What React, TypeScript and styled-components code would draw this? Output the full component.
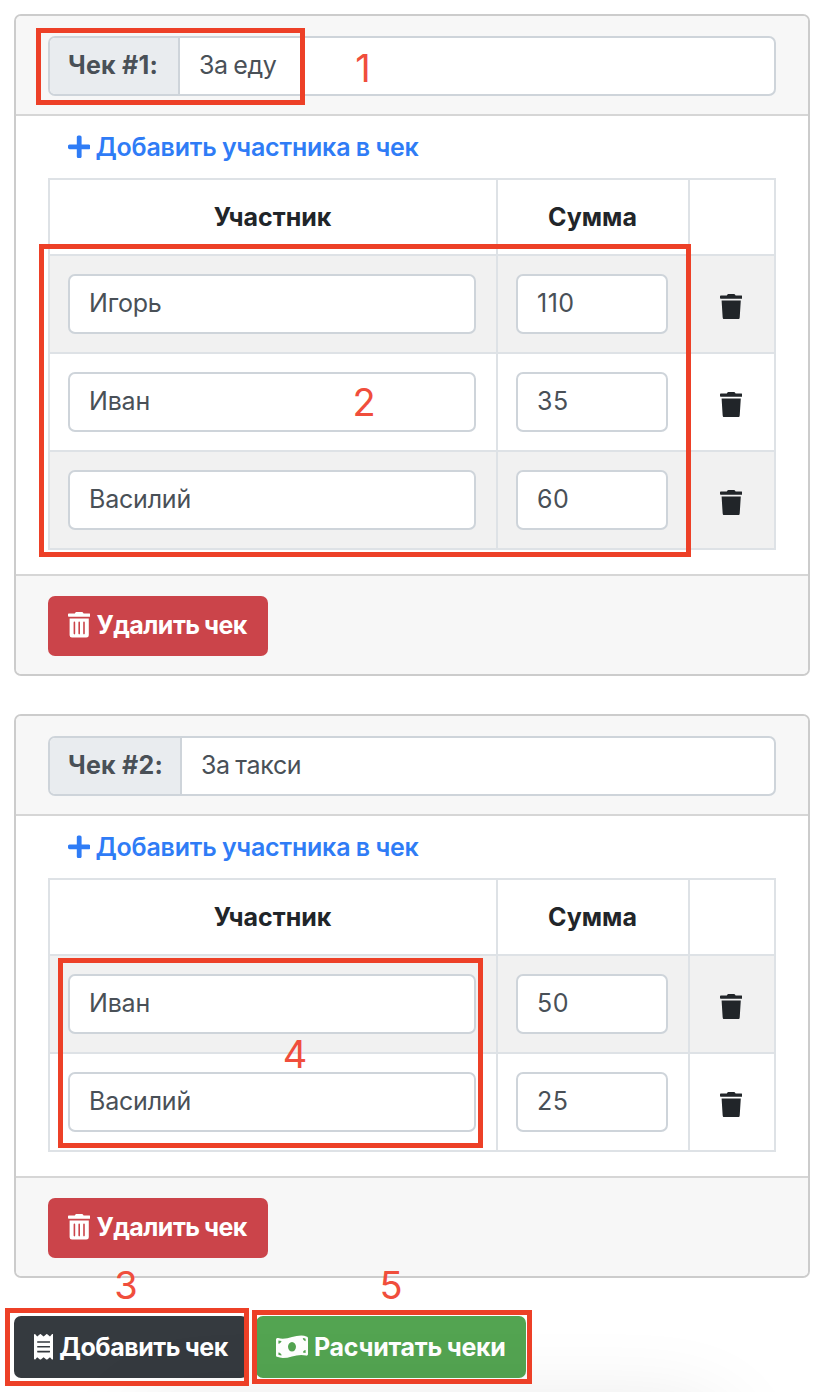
import React from 'react';
import styled, { createGlobalStyle } from 'styled-components';
import { FaPlus, FaTrash, FaTrashAlt, FaReceipt, FaMoneyBillWave } from 'react-icons/fa';

const GlobalStyle = createGlobalStyle`
  *, *::before, *::after { box-sizing: border-box; }
  body {
    margin: 0;
    background: #fff;
    color: #212529;
    font-family: Inter, "Liberation Sans", sans-serif;
    font-size: 25px;
    line-height: 38px;
  }
`;

const Page = styled.main`
  position: relative;
  display: flex;
  flex-direction: column;
  width: 822px;
  height: 1392px;
  padding: 14px 12px 0 14px;
  overflow: hidden;
`;

const Card = styled.section`
  display: flex;
  flex-direction: column;
  border: 2px solid #ccc;
  border-radius: 7px;
  margin-bottom: 38px;
  background: #fff;
  overflow: hidden;
`;

const CardHeader = styled.header`
  padding: 20px 32px 18px;
  background: #f7f7f7;
  border-bottom: 2px solid #d6d6d6;
`;

const CardBody = styled.div`
  padding: 0 32px 24px;
`;

const CardFooter = styled.footer`
  display: flex;
  padding: 20px 32px 18px;
  background: #f7f7f7;
  border-top: 2px solid #d6d6d6;
`;

const InputGroup = styled.div`
  display: flex;
  height: 60px;
  border: 2px solid #ced4da;
  border-radius: 7px;
  background: #fff;
  overflow: hidden;
`;

const Prefix = styled.label<{ $width: number }>`
  width: ${(p) => p.$width}px;
  padding: 8px 0 0 18px;
  background: #e9ecef;
  border-right: 2px solid #ced4da;
  color: #495057;
  font-weight: 700;
  letter-spacing: 0.25px;
  white-space: nowrap;
`;

const GroupValue = styled.div`
  flex: 1;
  padding: 8px 19px 0;
  color: #495057;
  letter-spacing: -0.35px;
  word-spacing: -1.2px;
`;

const AddLink = styled.button`
  display: flex;
  align-items: center;
  gap: 5px;
  height: 62px;
  padding: 0 0 0 20px;
  border: 0;
  background: none;
  color: #2f7cf6;
  font: inherit;
  font-weight: 600;
  letter-spacing: -0.2px;
  word-spacing: -0.6px;
  white-space: nowrap;

  svg { width: 22.4px; height: 25.6px; }
`;

const Table = styled.div`
  display: grid;
  border: 2px solid #dee2e6;
  border-top: 0;
`;

const Row = styled.div<{ $striped?: boolean; $head?: boolean }>`
  display: grid;
  grid-template-columns: 448px 192px 1fr;
  height: ${(p) => (p.$head ? 76 : 98)}px;
  border-top: 2px solid #dee2e6;
  background: ${(p) => (p.$striped ? '#f1f1f1' : '#fff')};
`;

const HeadCell = styled.div`
  padding: 18px 1px 0 0;
  border-right: 2px solid #dee2e6;
  font-weight: 700;
  text-align: center;
  &:last-child { border-right: 0; }
`;

const Cell = styled.div`
  display: flex;
  padding: 18px 20px 18px 18px;
  border-right: 2px solid #dee2e6;
  &:last-child {
    border-right: 0;
    padding: 5px 2px 0 0;
    align-items: center;
    justify-content: center;
  }
  & > svg { width: 22.4px; height: 25.6px; }
`;

const Field = styled.div<{ $numeric?: boolean }>`
  flex: 1;
  height: 60px;
  padding: 8px 19px 0;
  border: 2px solid #ced4da;
  border-radius: 7px;
  background: #fff;
  color: #495057;
  letter-spacing: ${(p) => (p.$numeric ? '0.5px' : '-0.2px')};
  font-kerning: ${(p) => (p.$numeric ? 'none' : 'normal')};
`;

const Button = styled.button<{
  $bg: string;
  $width: number;
  $height: number;
  $icon: number;
  $tracking: number;
}>`
  display: flex;
  align-items: center;
  gap: 6px;
  width: ${(p) => p.$width}px;
  height: ${(p) => p.$height}px;
  padding: 0 0 ${(p) => (p.$height === 60 ? 2 : 0)}px 20px;
  border: 0;
  border-radius: 7px;
  background: ${(p) => p.$bg};
  color: #fff;
  font: inherit;
  font-weight: 700;
  letter-spacing: ${(p) => p.$tracking}px;
  word-spacing: -0.8px;
  white-space: nowrap;

  svg { flex: none; height: 25.6px; width: ${(p) => p.$icon}px; }
`;

const Actions = styled.div`
  display: flex;
  gap: 8px;
`;

const BottomShade = styled.div`
  position: absolute;
  left: 140px;
  right: 100px;
  top: 1414px;
  height: 100px;
  border-radius: 30px;
  box-shadow: 0 0 90px rgba(0, 0, 0, 0.12);
`;

const Highlight = styled.div<{ $x: number; $y: number; $w: number; $h: number }>`
  position: absolute;
  left: ${(p) => p.$x}px;
  top: ${(p) => p.$y}px;
  width: ${(p) => p.$w}px;
  height: ${(p) => p.$h}px;
  border: 5px solid #ed4027;
`;

const Marker = styled.span<{ $x: number; $y: number }>`
  position: absolute;
  left: ${(p) => p.$x}px;
  top: ${(p) => p.$y}px;
  width: 40px;
  line-height: 40px;
  text-align: center;
  color: #f04e3c;
  font-size: 38px;
`;

type Bill = { id: number; title: string; prefix: number; people: [string, number][] };

const bills: Bill[] = [
  { id: 1, title: 'За еду', prefix: 130, people: [['Игорь', 110], ['Иван', 35], ['Василий', 60]] },
  { id: 2, title: 'За такси', prefix: 132, people: [['Иван', 50], ['Василий', 25]] },
];

const highlights = [
  [36, 28, 269, 77],
  [39, 244, 652, 313],
  [58, 958, 425, 190],
  [5, 1308, 244, 78],
  [252, 1310, 280, 74],
];

const markers = [
  [1, 343, 48],
  [2, 344, 382],
  [3, 106, 1265],
  [4, 275, 1034],
  [5, 371, 1265],
];

function BillCard({ bill }: { bill: Bill }) {
  return (
    <Card>
      <CardHeader>
        <InputGroup>
          <Prefix $width={bill.prefix}>Чек #{bill.id}:</Prefix>
          <GroupValue>{bill.title}</GroupValue>
        </InputGroup>
      </CardHeader>
      <CardBody>
        <AddLink><FaPlus />Добавить участника в чек</AddLink>
        <Table>
          <Row $head>
            <HeadCell>Участник</HeadCell>
            <HeadCell>Сумма</HeadCell>
            <HeadCell />
          </Row>
          {bill.people.map(([name, sum], i) => (
            <Row key={name} $striped={i % 2 === 0}>
              <Cell><Field>{name}</Field></Cell>
              <Cell><Field $numeric>{sum}</Field></Cell>
              <Cell><FaTrash /></Cell>
            </Row>
          ))}
        </Table>
      </CardBody>
      <CardFooter>
        <Button $bg="#cb444a" $width={220} $height={60} $icon={22.4} $tracking={-0.55}>
          <FaTrashAlt />Удалить чек
        </Button>
      </CardFooter>
    </Card>
  );
}

export default function App() {
  return (
    <>
      <GlobalStyle />
      <Page>
        <BottomShade />
        {bills.map((bill) => <BillCard key={bill.id} bill={bill} />)}
        <Actions>
          <Button $bg="#353a3f" $width={234} $height={62} $icon={19.2} $tracking={-0.45}>
            <FaReceipt />Добавить чек
          </Button>
          <Button $bg="#53a451" $width={270} $height={62} $icon={32} $tracking={-0.3}>
            <FaMoneyBillWave />Расчитать чеки
          </Button>
        </Actions>
        {highlights.map(([x, y, w, h]) => <Highlight key={y} $x={x} $y={y} $w={w} $h={h} />)}
        {markers.map(([n, x, y]) => <Marker key={n} $x={x} $y={y}>{n}</Marker>)}
      </Page>
    </>
  );
}
